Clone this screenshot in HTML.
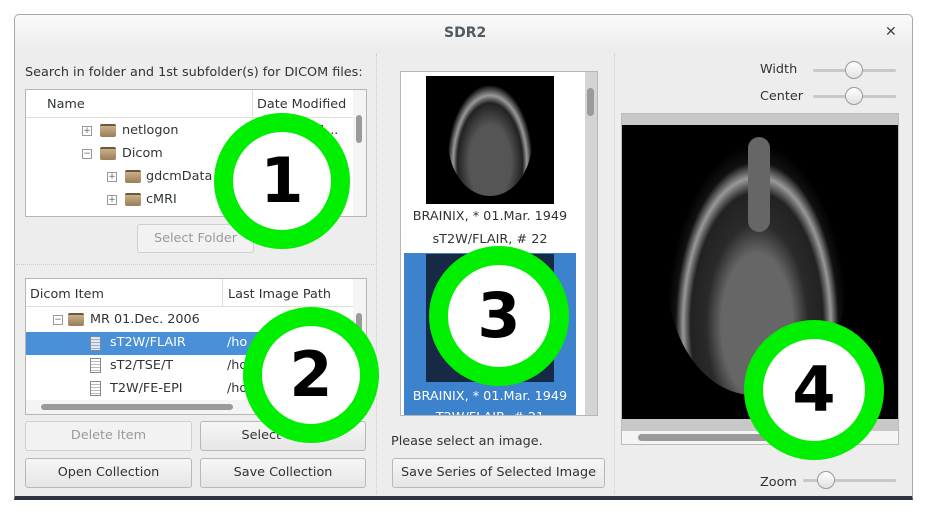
<!DOCTYPE html><html><head><style>
*{box-sizing:border-box;margin:0;padding:0}
body{width:926px;height:512px;background:#fff;position:relative;overflow:hidden;font-family:"DejaVu Sans","Liberation Sans",sans-serif;font-size:12.8px;color:#2e3436}
.a{position:absolute}
.win{left:14px;top:14px;width:899px;height:486px;background:#ededed;border:1px solid #a8a8a8;border-radius:5px 5px 0 0;border-bottom:4px solid #2e3440}
.title{left:15px;top:15px;width:897px;height:38px;background:linear-gradient(#fafafa,#ebebeb);border-radius:5px 5px 0 0}
.box{background:#fff;border:1px solid #b6b6b6}
.btn{border:1px solid #b8b8b8;border-radius:3px;background:linear-gradient(#f6f6f6,#e6e6e6);text-align:center;line-height:28px}
.dis{color:#9a9a9a;background:#f2f2f2;border-color:#cfcfcf}
.th{background:#9a9a9a;border-radius:4px}
.fold{width:16px;height:13px;background:linear-gradient(#c8b08a,#9c7d55);border-radius:2px;border-top:2px solid #6e5636}
.ex{width:10px;height:10px;border:1px solid #999;font-size:9px;line-height:8px;text-align:center;color:#666}
.doc{width:11px;height:15px;border:1px solid #888;background:repeating-linear-gradient(#fff 0 2px,#bbb 2px 3px);}
.ring{border-radius:50%;background:#fff;border:19px solid #00ee00;font-weight:bold;font-size:62px;color:#000;text-align:center;font-family:"DejaVu Sans",sans-serif}
.sl{height:3px;background:#c8c8c8;border-radius:2px}
.kn{width:18px;height:18px;border-radius:50%;background:linear-gradient(#fff,#e2e2e2);border:1px solid #999}
.dot{border-left:1px dotted #ccc}
</style></head><body>
<div class="a win"></div>
<div class="a title"></div>
<div class="a" style="left:444px;top:25px;font-weight:bold;color:#4f5b62;font-size:14px">SDR2</div>
<div class="a" style="left:885px;top:24px;font-weight:bold;color:#444;font-size:14px">✕</div>
<div class="a dot" style="left:376px;top:54px;height:440px"></div>
<div class="a dot" style="left:614px;top:54px;height:440px"></div>
<div class="a" style="left:16px;top:264px;width:358px;border-top:1px dotted #ccc"></div>

<div class="a" style="left:25px;top:65px">Search in folder and 1st subfolder(s) for DICOM files:</div>
<div class="a box" style="left:25px;top:89px;width:342px;height:128px"></div>
<div class="a" style="left:26px;top:90px;width:327px;height:28px;border-bottom:1px solid #ddd"></div>
<div class="a" style="left:252px;top:90px;height:28px;border-left:1px solid #ddd"></div>
<div class="a" style="left:47px;top:97px">Name</div>
<div class="a" style="left:257px;top:97px">Date Modified</div>
<div class="a" style="left:353px;top:90px;width:13px;height:126px;background:#f4f4f4"></div>
<div class="a th" style="left:356px;top:115px;width:6px;height:28px"></div>
<div class="a ex" style="left:82px;top:126px">+</div><div class="a fold" style="left:100px;top:124px"></div><div class="a" style="left:122px;top:123px">netlogon</div>
<div class="a" style="left:318px;top:123px">1...</div>
<div class="a ex" style="left:82px;top:149px">−</div><div class="a fold" style="left:100px;top:147px"></div><div class="a" style="left:122px;top:146px">Dicom</div>
<div class="a ex" style="left:107px;top:172px">+</div><div class="a fold" style="left:125px;top:170px"></div><div class="a" style="left:146px;top:169px">gdcmData</div>
<div class="a ex" style="left:107px;top:195px">+</div><div class="a fold" style="left:125px;top:193px"></div><div class="a" style="left:146px;top:192px">cMRI</div>
<div class="a btn dis" style="left:137px;top:224px;width:117px;height:29px">Select Folder</div>

<div class="a box" style="left:25px;top:278px;width:342px;height:137px"></div>
<div class="a" style="left:26px;top:279px;width:327px;height:28px;border-bottom:1px solid #ddd"></div>
<div class="a" style="left:222px;top:279px;height:28px;border-left:1px solid #ddd"></div>
<div class="a" style="left:30px;top:287px">Dicom Item</div>
<div class="a" style="left:228px;top:287px">Last Image Path</div>
<div class="a" style="left:353px;top:279px;width:13px;height:121px;background:#f4f4f4"></div>
<div class="a th" style="left:356px;top:313px;width:6px;height:20px"></div>
<div class="a ex" style="left:53px;top:315px">−</div><div class="a fold" style="left:68px;top:313px"></div><div class="a" style="left:90px;top:312px">MR 01.Dec. 2006</div>
<div class="a" style="left:26px;top:332px;width:327px;height:23px;background:#4a90d9"></div>
<div class="a doc" style="left:90px;top:336px;opacity:.8"></div><div class="a" style="left:110px;top:335px;color:#fff">sT2W/FLAIR</div><div class="a" style="left:227px;top:335px;color:#fff">/ho</div>
<div class="a doc" style="left:90px;top:358px"></div><div class="a" style="left:110px;top:358px">sT2/TSE/T</div><div class="a" style="left:227px;top:358px">/ho</div>
<div class="a doc" style="left:90px;top:381px"></div><div class="a" style="left:110px;top:381px">T2W/FE-EPI</div><div class="a" style="left:227px;top:381px">/ho</div>
<div class="a" style="left:26px;top:400px;width:340px;height:14px;background:#f4f4f4"></div>
<div class="a th" style="left:41px;top:404px;width:192px;height:6px"></div>
<div class="a btn dis" style="left:25px;top:421px;width:167px;height:30px">Delete Item</div>
<div class="a btn" style="left:200px;top:421px;width:166px;height:30px">Select Series</div>
<div class="a btn" style="left:25px;top:458px;width:167px;height:30px">Open Collection</div>
<div class="a btn" style="left:200px;top:458px;width:166px;height:30px">Save Collection</div>

<div class="a box" style="left:400px;top:71px;width:198px;height:345px"></div>
<div class="a" style="left:585px;top:72px;width:12px;height:343px;background:#d4d4d4"></div>
<div class="a th" style="left:587px;top:88px;width:7px;height:28px"></div>
<div class="a" style="left:426px;top:76px;width:128px;height:128px;background:#000;overflow:hidden"><div class="a" style="left:22px;top:10px;width:84px;height:110px;border-radius:45% 45% 50% 50%;background:radial-gradient(ellipse at 50% 70%,#555 0 35%,#222 55%,#999 62%,#000 72%)"></div></div>
<div class="a" style="left:390px;top:209px;width:200px;text-align:center">BRAINIX, * 01.Mar. 1949</div>
<div class="a" style="left:390px;top:232px;width:200px;text-align:center">sT2W/FLAIR, # 22</div>
<div class="a" style="left:404px;top:253px;width:172px;height:162px;background:#3c82cc;overflow:hidden">
<div class="a" style="left:22px;top:1px;width:128px;height:128px;background:#172a45"></div>
<div class="a" style="left:-14px;top:136px;width:200px;text-align:center;color:#fff">BRAINIX, * 01.Mar. 1949</div>
<div class="a" style="left:-14px;top:157px;width:200px;text-align:center;color:#fff">T2W/FLAIR, # 21</div></div>
<div class="a" style="left:391px;top:434px">Please select an image.</div>
<div class="a btn" style="left:392px;top:458px;width:213px;height:30px">Save Series of Selected Image</div>

<div class="a" style="left:760px;top:62px">Width</div>
<div class="a sl" style="left:813px;top:69px;width:83px"></div><div class="a kn" style="left:845px;top:61px"></div>
<div class="a" style="left:760px;top:89px">Center</div>
<div class="a sl" style="left:813px;top:95px;width:83px"></div><div class="a kn" style="left:845px;top:87px"></div>
<div class="a" style="left:621px;top:113px;width:278px;height:332px;background:#c8c8c8;border:1px solid #bbb"></div>
<div class="a" style="left:622px;top:125px;width:276px;height:294px;background:#000;overflow:hidden">
<div class="a" style="left:45px;top:20px;width:180px;height:250px;border-radius:45% 45% 48% 48%;background:radial-gradient(ellipse at 50% 72%,#666 0 28%,#2a2a2a 40%,#222 52%,#999 58%,#111 64%,#000 71%)"></div>
<div class="a" style="left:126px;top:12px;width:22px;height:95px;border-radius:11px;background:#666"></div></div>
<div class="a" style="left:622px;top:431px;width:276px;height:13px;background:#f4f4f4"></div>
<div class="a th" style="left:638px;top:434px;width:130px;height:7px"></div>
<div class="a" style="left:760px;top:475px">Zoom</div>
<div class="a sl" style="left:803px;top:479px;width:93px"></div><div class="a kn" style="left:817px;top:471px"></div>

<div class="a ring" style="left:214px;top:113px;width:136px;height:136px;line-height:98px">1</div>
<div class="a ring" style="left:243px;top:307px;width:136px;height:136px;line-height:98px">2</div>
<div class="a ring" style="left:429px;top:246px;width:140px;height:140px;line-height:102px">3</div>
<div class="a ring" style="left:744px;top:320px;width:140px;height:140px;line-height:102px">4</div>
</body></html>
